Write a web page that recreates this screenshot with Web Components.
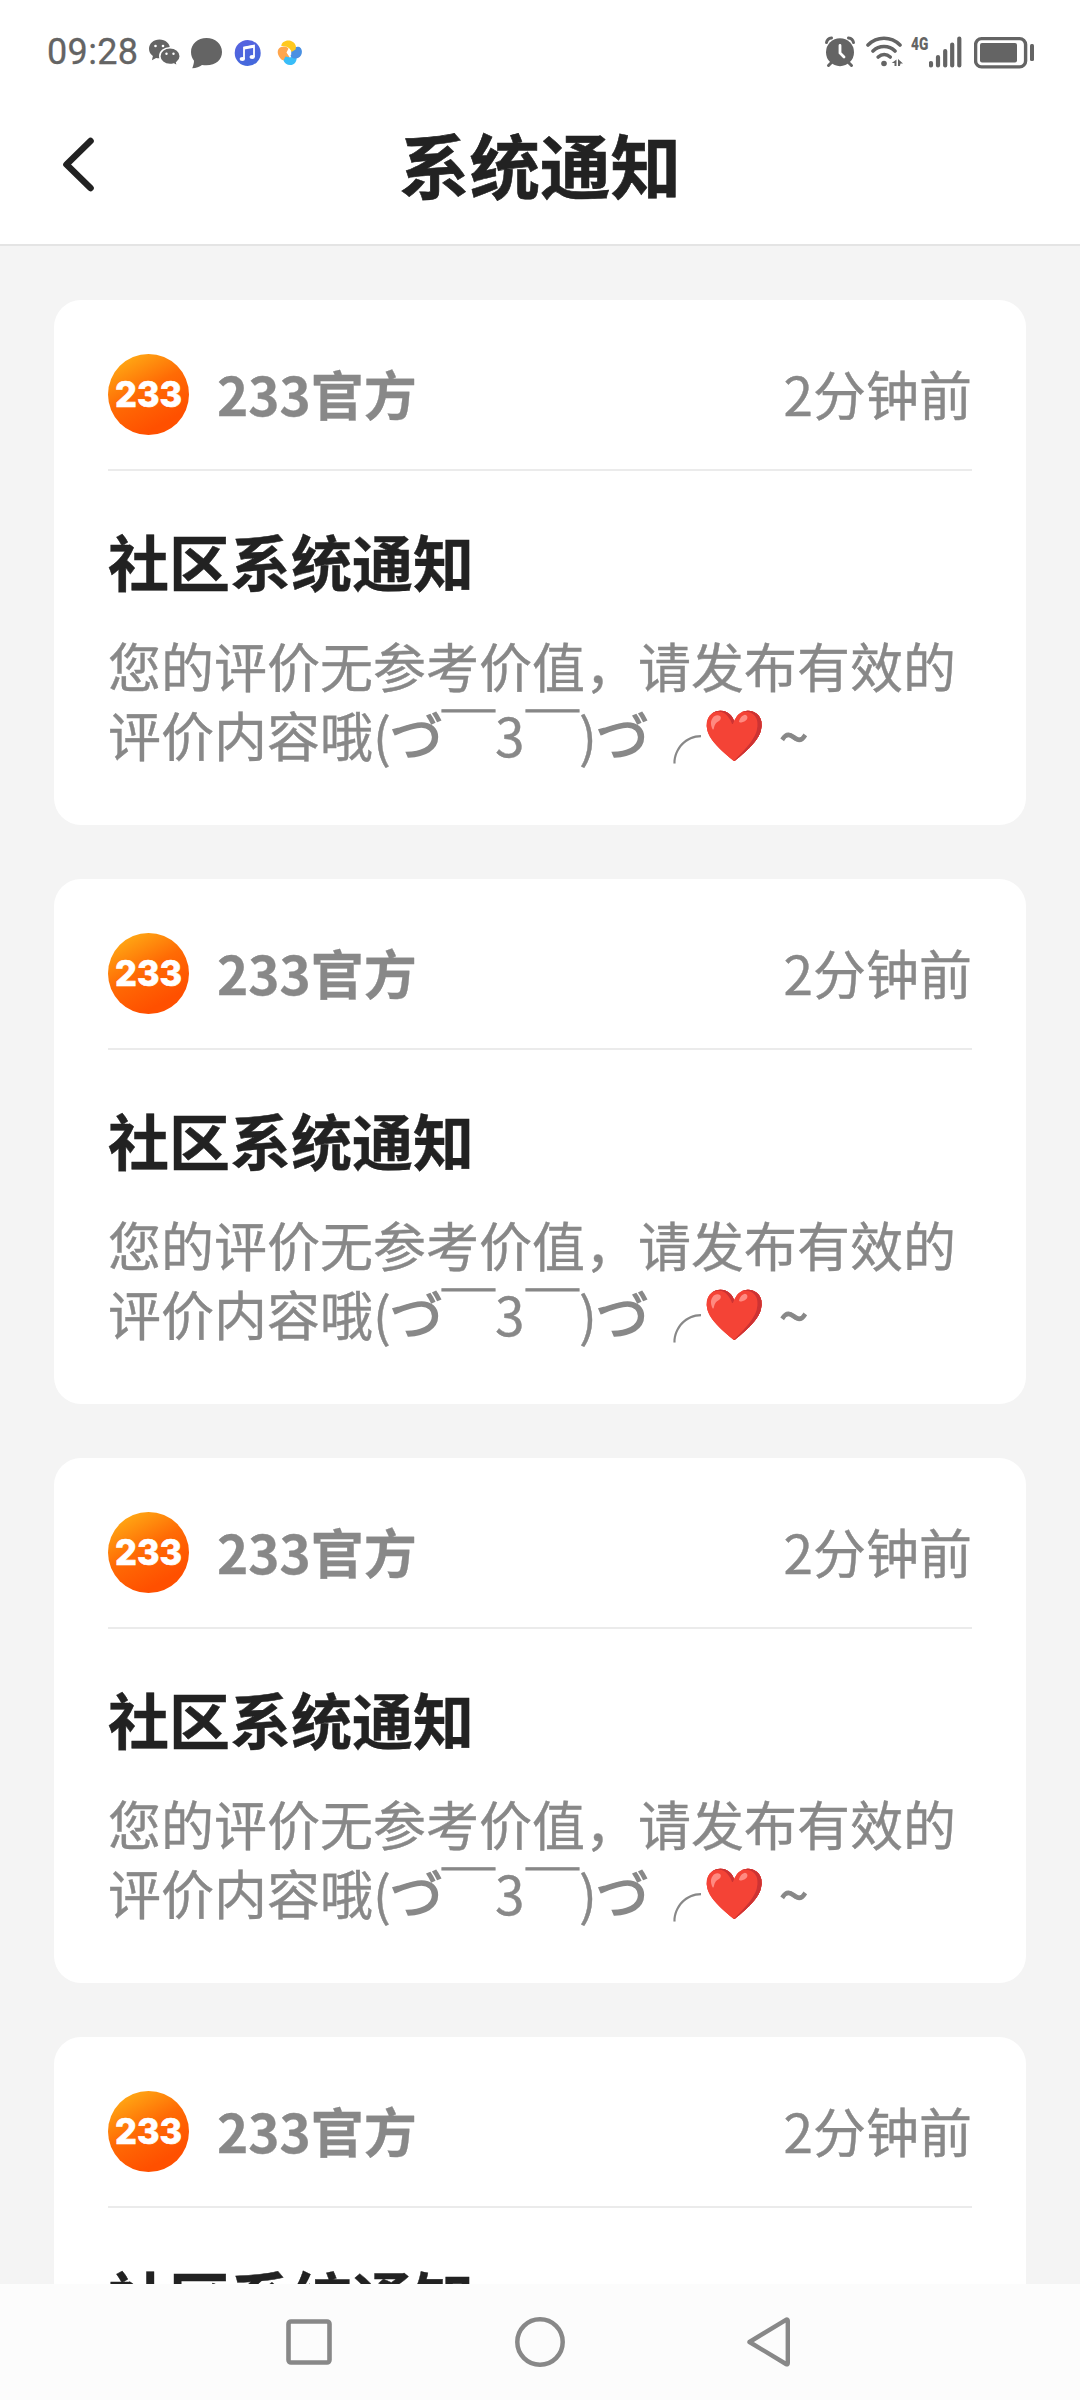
<!DOCTYPE html>
<html lang="zh-CN">
<head>
<meta charset="utf-8">
<title>系统通知</title>
<style>
html,body{margin:0;padding:0}
body{font-family:"Noto Sans CJK SC","Noto Sans CJK JP",sans-serif;background:#f4f4f4}
</style>
</head>
<body>
<notice-app></notice-app>
<script>
const define = (name, html) => {
  const t = document.createElement('template');
  t.innerHTML = html;
  customElements.define(name, class extends HTMLElement {
    constructor() {
      super();
      this.attachShadow({ mode: 'open' }).append(t.content.cloneNode(true));
    }
  });
};

define('status-bar', `
<style>
:host{display:flex;height:90px;padding:0 44px 0 47px;box-sizing:border-box;color:#646464}
svg{display:block;height:90px;flex:none}
.time{font:36px/90px Roboto,sans-serif;width:102px;padding-top:7px;box-sizing:border-box;letter-spacing:.35px;-webkit-text-stroke:.3px #646464}
.net{font:bold 19px/20px "Roboto",sans-serif;width:18px;margin:34px 0 0 7px;white-space:nowrap}
.net b{display:block;transform:scaleX(.72);transform-origin:0 0;width:26px}
.gap{flex:1}
</style>
<span class="time">09:28</span>
<svg width="32" viewBox="149 0 32 90"><g fill="#646464"><path d="M159.500 39.500C153.500 39.500 149 43.600 149 48.800c0 3 1.500 5.600 3.900 7.200l-1 4.200 4.200-2.300c5 1.400 13 -.4 13.900-9.100C170 43.500 165.500 39.500 159.500 39.500z"/><path stroke="#fff" stroke-width="1.600" d="M170 47.800c-5.600 0-10.200 3.700-10.200 8.400s4.600 8.400 10.200 8.400c1.500 0 2.700-.2 3.900-.6l3.700 2.200-.9-3.600c2.100-1.600 3.600-3.800 3.600-6.400 0-4.700-4.700-8.400-10.300-8.400z"/></g><g fill="#fff"><circle cx="155.500" cy="46" r="1.300"/><circle cx="163" cy="46" r="1.300"/><circle cx="166.500" cy="53.700" r="1.200"/><circle cx="173.500" cy="53.700" r="1.200"/></g></svg>
<svg width="32" style="margin-left:10px" viewBox="191 0 32 90"><path fill="#646464" d="M206.500 38c-8.700 0-15.500 6-15.500 14 0 3.800 1.400 6.500 3 8.700 0 2.800-.8 5-1.800 7.500 4 0 7.400-1.300 9.800-3.200 12.500 2 20-4.700 20-13 0-8-6.800-14-15.500-14z"/></svg>
<svg width="28" style="margin-left:11px" viewBox="234 0 28 90"><defs><linearGradient id="m" x1="0" y1="0" x2=".3" y2="1"><stop stop-color="#5a62e0"/><stop offset="1" stop-color="#4468dc"/></linearGradient></defs><circle cx="247.700" cy="53" r="13" fill="url(#m)"/><path d="M244 59V47.500l10-1.800V57" fill="none" stroke="#fff" stroke-width="1.800"/><path d="M244 48.200l10-1.800" stroke="#fff" stroke-width="2.600"/><ellipse cx="242.300" cy="59" rx="2.700" ry="2" fill="#fff"/><ellipse cx="252.200" cy="57" rx="2.700" ry="2" fill="#fff"/></svg>
<svg width="28" style="margin-left:14px" viewBox="276 0 28 90"><path fill="#ffa64d" d="M289.500 57c-2 3.500-6 5-9 1.500-3-3.500-4.500-9 .5-11.500 3-1.200 6-.2 7.500 1.500l-2 4z"/><path fill="#39bdf8" d="M292.500 53c4 1.500 5.500 5.500 2.800 9.500-3.500 4.500-10.500 2.500-11.800-2l2-4 5 1z"/><path fill="#4a90e2" d="M291 53.500c0-4.500 3.500-7.500 8.500-6.500 4.500 3 2.500 11-3.500 11.500-3.500.2-6.500-2-5-5z"/><path fill="#ffc91f" d="M281.300 46c0-4 5-6.500 9.200-5.300 4.500 1.300 6.500 5.800 5 8.800l-4 2.500c-1-4-5-6-10.200-6z"/><path fill="#fff" d="M288 51.800h3.200v3h-3.200z"/></svg>
<span class="gap"></span>
<svg width="32" viewBox="824 0 32 90"><g fill="none" stroke="#646464" stroke-width="3" stroke-linecap="round"><path d="M826.500 42.500c.5-2.500 2.500-4.200 5-4.500M853.500 42.500c-.5-2.500-2.500-4.200-5-4.500M831 63l-2.500 2.500M849 63l2.500 2.500"/></g><circle cx="840" cy="52.200" r="14" fill="#646464"/><path d="M840 45.500v7.500l4 4" fill="none" stroke="#fff" stroke-width="2.800" stroke-linecap="round"/></svg>
<svg width="38" style="margin-left:10px" viewBox="866 0 38 90"><g fill="none" stroke="#646464" stroke-width="3.600" stroke-linecap="round"><path d="M868 45c9-9 23-9 32 0M873 51c6-6 16-6 22 0M878.200 57c3.600-3.300 8.400-3.300 12 0"/></g><circle cx="884" cy="63.500" r="2.800" fill="#646464"/><path fill="#646464" d="M896.500 59.500v6.500h-2v-3h-2.800zM898 59l5 4.500h-2.500l-.6 2.500h-1.900z"/></svg>
<span class="net"><b>4G</b></span>
<svg width="34" viewBox="929 0 34 90"><path d="M931 63v2.500M938 57v8.500M945.200 51v14.500M952.200 44.500v21M959.300 38.500v27" stroke="#646464" stroke-width="4.200" stroke-linecap="round"/></svg>
<svg width="62" style="margin-left:11px" viewBox="974 0 62 90"><rect x="975.600" y="38.600" width="50" height="28.300" rx="6" fill="none" stroke="#646464" stroke-width="3.400"/><rect x="980" y="43" width="37" height="19.500" rx="2" fill="#646464"/><rect x="1030" y="44" width="4" height="17" rx="1.500" fill="#646464"/></svg>
`);

define('title-bar', `
<style>
:host{display:grid;grid-template-columns:180px 1fr 180px;height:156px;box-sizing:border-box;border-bottom:2px solid #e4e4e4;align-items:start}
svg{display:block;margin:42px 0 0 56px}
h1{margin:18.500px 0 0;font-size:70.500px;line-height:108px;font-weight:700;text-align:center;color:#222;-webkit-text-stroke:.6px #222}
</style>
<svg width="44" height="66" viewBox="56 132 44 66"><path d="M90.500 141L66.500 164.500l24 23.500" fill="none" stroke="#222" stroke-width="6.600" stroke-linecap="round" stroke-linejoin="round"/></svg>
<h1><slot></slot></h1>
`);

define('official-avatar', `
<style>:host{display:block;width:81px;height:81px}svg{display:block}</style>
<svg width="81" height="81" viewBox="0 0 81 81"><defs><linearGradient id="a" x1=".15" y1=".08" x2=".6" y2=".9"><stop stop-color="#ffa814"/><stop offset=".5" stop-color="#ff6b05"/><stop offset="1" stop-color="#ff5000"/></linearGradient></defs><circle cx="40.500" cy="40.500" r="40.500" fill="url(#a)"/><text x="7" y="53" textLength="67" lengthAdjust="spacingAndGlyphs" font-family="Inter,sans-serif" font-weight="800" font-size="35" fill="#fff" stroke="#fff" stroke-width=".6">233</text></svg>
`);

define('notice-card', `
<style>
:host{display:block;height:525px;flex:none;box-sizing:border-box;background:#fff;border-radius:27px;padding:54px}
header{display:flex;align-items:flex-start;height:117px;box-sizing:border-box;border-bottom:2px solid #ebebeb;color:#888;font-size:53px}
.name{font-weight:700;margin:-1.500px 0 0 28px;line-height:81px;-webkit-text-stroke:.3px #888}
time{margin:-1.500px 0 0 auto;line-height:81px;font-size:53px;-webkit-text-stroke:.4px #888}
h2{margin:45px 0 0;font-size:61px;line-height:90px;font-weight:700;color:#222;white-space:nowrap;-webkit-text-stroke:.4px #222}
.p{margin-top:25px;color:#888;font-size:53px;line-height:69px;white-space:nowrap;-webkit-text-stroke:.4px #888}
</style>
<header><official-avatar></official-avatar><span class="name"><slot name="name"></slot></span><time><slot name="time"></slot></time></header>
<h2><slot name="title"></slot></h2>
<div class="p"><slot></slot></div>
`);

define('kaomoji-line', `
<style>
:host{display:flex;height:69px}
span{display:block;flex:none;white-space:pre}
.k{-webkit-text-stroke:1.600px #888}
.m{-webkit-text-stroke:1.200px #888}
.b{-webkit-text-stroke:0}
.h{font-family:"Noto Color Emoji",sans-serif;font-size:50px;margin-top:2px}
.t{-webkit-text-stroke:1.200px #888}
</style>
<span style="width:265px">评价内容哦</span><span style="width:17px">(</span><span class="k" style="width:52px">づ</span><span class="m" style="width:53px">￣</span><span style="width:31px">3</span><span class="m" style="width:53px">￣</span><span style="width:17px">)</span><span class="k" style="width:52px">づ</span><span class="b" style="width:55px">╭</span><span class="h" style="width:76px">❤️</span><span class="t">~</span>
`);

define('nav-bar', `
<style>
:host{display:flex;justify-content:center;gap:180px;height:116px;background:#fcfcfc;align-items:center}
svg{display:block}
</style>
<svg width="52" height="56" viewBox="282 2314 52 56"><rect x="288.500" y="2321.500" width="41" height="41" rx="2.500" fill="none" stroke="#888" stroke-width="4.600"/></svg>
<svg width="52" height="56" viewBox="514 2314 52 56"><circle cx="540" cy="2342" r="22.700" fill="none" stroke="#888" stroke-width="4.500"/></svg>
<svg width="52" height="56" viewBox="746 2314 52 56"><path d="M749.500 2342L786 2319.800q1.800-.8 1.800 1V2363q0 2-1.800 1z" fill="none" stroke="#888" stroke-width="4.400" stroke-linejoin="round"/></svg>
`);

const head = `<span slot="name">233官方</span><span slot="time">2分钟前</span><span slot="title">社区系统通知</span>`;
const card = `<notice-card>${head}<div>您的评价无参考价值，请发布有效的</div><kaomoji-line></kaomoji-line></notice-card>`;

define('notice-app', `
<style>
:host{display:flex;flex-direction:column;width:1080px;height:2400px;overflow:hidden;background:#f4f4f4}
.top{background:#fff;flex:none}
main{flex:1;min-height:0;overflow:hidden;display:flex;flex-direction:column;gap:54px;padding:54px 54px 0;box-sizing:border-box}
nav-bar{flex:none}
</style>
<div class="top"><status-bar></status-bar><title-bar>系统通知</title-bar></div>
<main>${card.repeat(3)}<notice-card>${head}</notice-card></main>
<nav-bar></nav-bar>
`);
</script>
</body>
</html>
